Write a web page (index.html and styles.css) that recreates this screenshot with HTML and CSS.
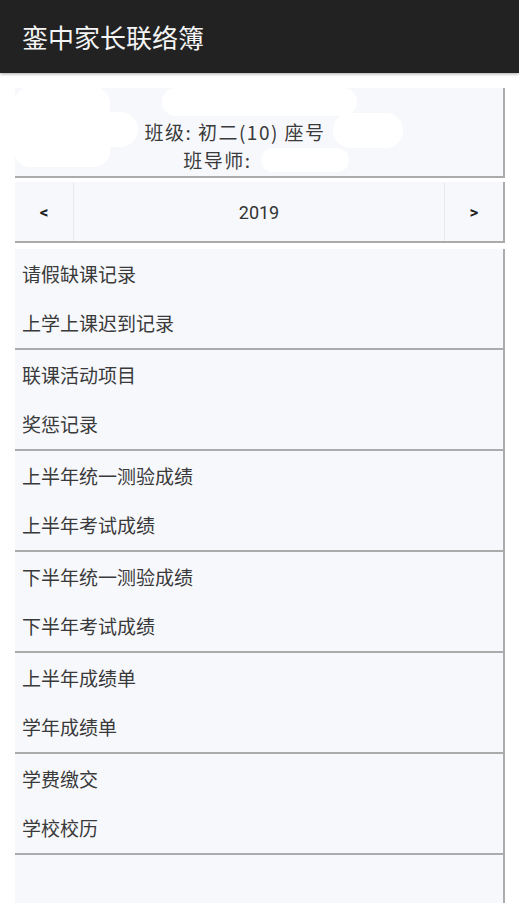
FILE: index.html
```html
<!DOCTYPE html>
<html lang="zh">
<head>
<meta charset="utf-8">
<title>銮中家长联络簿</title>
<link rel="stylesheet" href="styles.css">
</head>
<body>
<header class="appbar">
  <h1 class="title">銮中家长联络簿</h1>
</header>
<main class="content">
  <section class="info card">
    <p class="info-line">班级: 初二(10) 座号<span class="gap gap-1"></span></p>
    <p class="info-line">班导师:<span class="gap gap-2"></span></p>
    <span class="blob blob-a"></span>
    <span class="blob blob-a2"></span>
    <span class="blob blob-b"></span>
    <span class="blob blob-c"></span>
    <span class="blob blob-d"></span>
  </section>
  <nav class="year card">
    <button class="year-btn prev">&lt;</button>
    <div class="year-label">2019</div>
    <button class="year-btn next">&gt;</button>
  </nav>
  <section class="list card">
    <div class="group">
      <div class="item">请假缺课记录</div>
      <div class="item">上学上课迟到记录</div>
    </div>
    <div class="group">
      <div class="item">联课活动项目</div>
      <div class="item">奖惩记录</div>
    </div>
    <div class="group">
      <div class="item">上半年统一测验成绩</div>
      <div class="item">上半年考试成绩</div>
    </div>
    <div class="group">
      <div class="item">下半年统一测验成绩</div>
      <div class="item">下半年考试成绩</div>
    </div>
    <div class="group">
      <div class="item">上半年成绩单</div>
      <div class="item">学年成绩单</div>
    </div>
    <div class="group">
      <div class="item">学费缴交</div>
      <div class="item">学校校历</div>
    </div>
  </section>
</main>
</body>
</html>
```

FILE: styles.css
```css
* { box-sizing: border-box; }

html, body {
  margin: 0;
  padding: 0;
  background: #ffffff;
  height: 903px;
  overflow: hidden;
}

body {
  font-family: "Noto Sans CJK SC", "Noto Sans", Roboto, sans-serif;
  color: #3a3a3a;
}

.appbar {
  height: 73px;
  background: #222222;
  display: flex;
  align-items: center;
  padding-left: 22px;
  box-shadow: 0 1px 3px rgba(0, 0, 0, 0.35);
  position: relative;
  z-index: 2;
}

.title {
  margin: 0;
  font-size: 26px;
  font-weight: 400;
  color: #f4f4f4;
  line-height: 1;
}

.content {
  padding: 15px 14px 0 15px;
  display: flex;
  flex-direction: column;
}

.card {
  background: #f7f8fc;
  border-right: 2px solid #ababab;
  border-bottom: 2px solid #ababab;
}

.info {
  position: relative;
  height: 90px;
  padding-top: 30px;
  text-align: center;
}

.info-line {
  margin: 0;
  font-size: 19px;
  line-height: 28px;
  letter-spacing: 1.5px;
  color: #3a3a3a;
  white-space: nowrap;
}

.gap { display: inline-block; }
.gap-1 { width: 48px; }
.gap-2 { width: 83px; }

.blob {
  position: absolute;
  background: #ffffff;
}
.blob-a { left: -1px; top: -1px; width: 96px; height: 80px; border-radius: 16px; }
.blob-a2 { left: -1px; top: 24px; width: 124px; height: 35px; border-radius: 18px; }
.blob-b { left: 147px; top: 0; width: 195px; height: 28px; border-radius: 14px; }
.blob-c { left: 318px; top: 25px; width: 70px; height: 35px; border-radius: 17px; }
.blob-d { left: 246px; top: 60px; width: 88px; height: 24px; border-radius: 12px; }

.year {
  margin-top: 4px;
  height: 61px;
  display: flex;
  align-items: stretch;
}

.year-btn {
  width: 59px;
  border: none;
  background: #f7f8fc;
  font-family: Roboto, "Liberation Sans", sans-serif;
  font-weight: 700;
  font-size: 17px;
  color: #222;
  padding: 0;
  margin: 0;
}
.year-btn.prev { border-right: 1px solid #e8e9ee; }
.year-btn.next { border-left: 1px solid #e8e9ee; }

.year-label {
  flex: 1;
  display: flex;
  align-items: center;
  justify-content: center;
  font-family: Roboto, "Liberation Sans", sans-serif;
  font-size: 18px;
  color: #333;
  padding-top: 2px;
}

.list {
  margin-top: 6px;
  height: 654px;
  border-bottom: none;
}

.group {
  height: 101px;
  border-bottom: 2px solid #ababab;
  display: grid;
  grid-template-rows: 50px 49px;
}

.item {
  display: flex;
  align-items: center;
  padding-left: 7px;
  font-size: 19px;
  color: #3a3a3a;
  padding-bottom: 2px;
}
```
